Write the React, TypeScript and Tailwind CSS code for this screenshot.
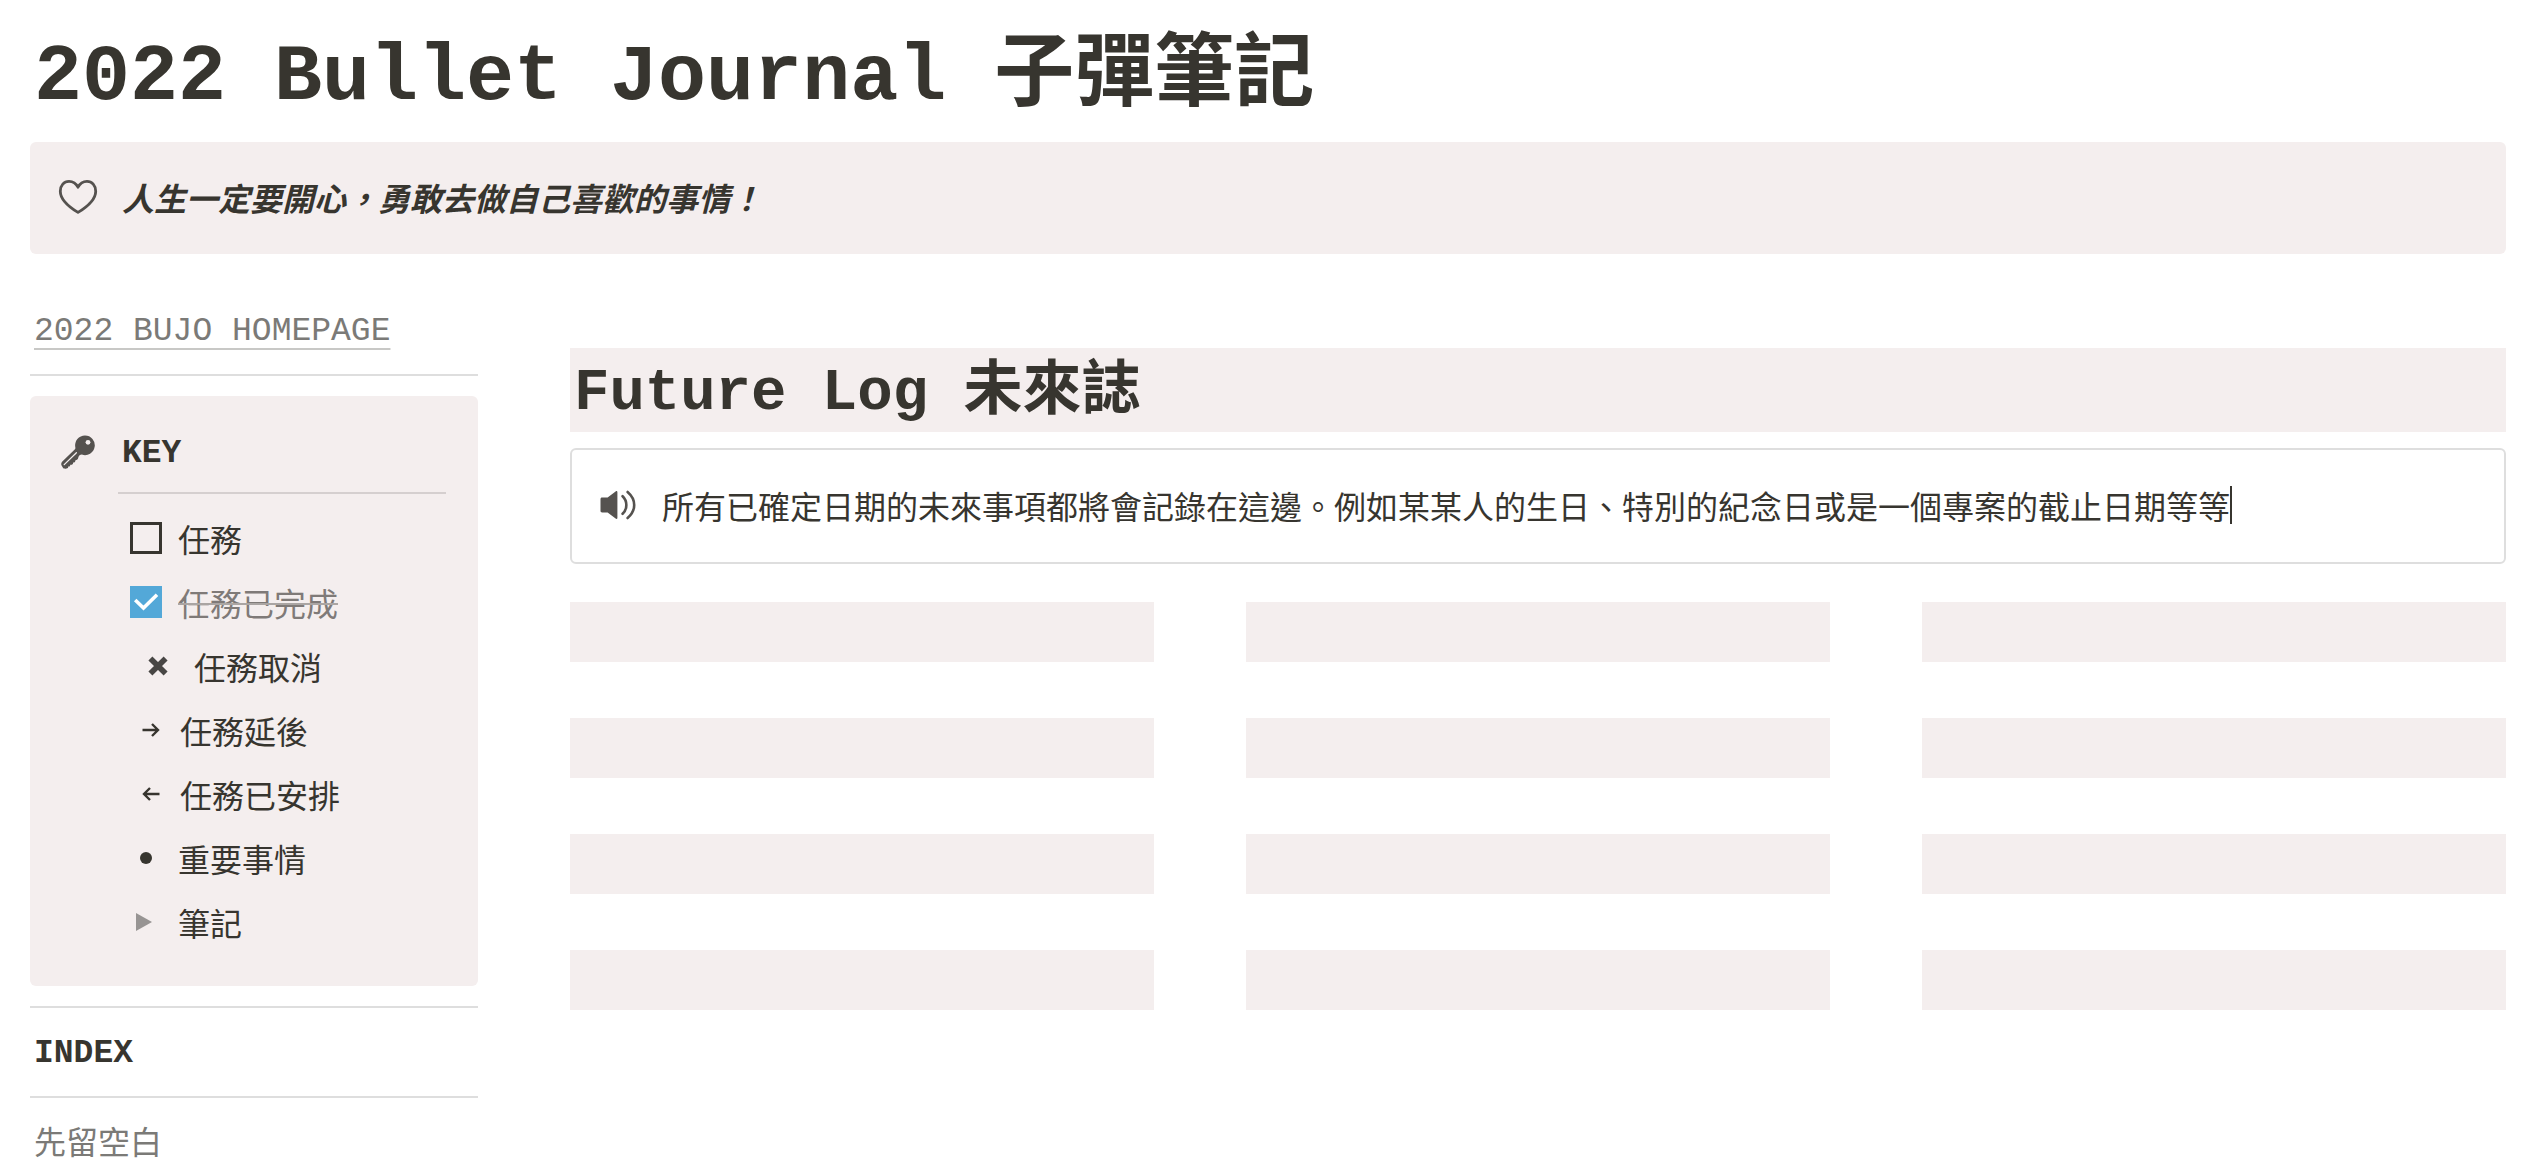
// src/App.tsx
import type { ReactNode } from "react";

interface KeyItem {
  label: string;
  marker: ReactNode;
  markerClass: string; // Marker column width and inset
}

function HeartIcon() {
  return (
    <svg viewBox="0 0 40 36" className="h-9 w-10 shrink-0" fill="none" aria-hidden="true">
      <path
        d="M20 33.4C15.4 30.6 2.3 22.6 2.3 12.2C2.3 6.4 6 2.3 11 2.3C15 2.3 18.2 4.6 20 8.2C21.8 4.6 25 2.3 29 2.3C34 2.3 37.7 6.4 37.7 12.2C37.7 22.6 24.6 30.6 20 33.4Z"
        stroke="#55524f"
        strokeWidth="2.8"
        strokeLinejoin="round"
      />
    </svg>
  );
}

function KeyIcon() {
  return (
    <svg viewBox="0 0 36 36" className="size-9 shrink-0" aria-hidden="true">
      <path
        d="M25 1.5A9.8 9.8 0 0 0 15.3 13.2C15.5 14.2 15.3 14.9 14.7 15.5L2.3 27.5C1 28.8 1 30.2 1.6 31.5L2.8 33.6C3.4 34.6 4.6 35 5.8 34.7L7.2 34.3C8 34.1 8.3 33.5 8.2 32.6C9.6 32.7 10.3 32 10.3 30.7C12 31.1 13.2 30.3 13.1 28.5C14.9 28.6 15.5 27.7 15.2 26.4C17 26.3 18 25.3 18.3 23.6C18.8 21.8 20 20.6 21.9 20.6A9.8 9.8 0 1 0 25 1.5Z"
        fill="#55524f"
      />
      <circle cx="28" cy="8.3" r="2.4" fill="#f4eeee" />
      <path d="M4.2 30.6L16.4 18.8" stroke="#f4eeee" strokeWidth="1.3" strokeLinecap="round" />
    </svg>
  );
}

function SpeakerIcon() {
  return (
    <svg viewBox="0 0 36 30" className="h-[30px] w-9 shrink-0" fill="none" aria-hidden="true">
      <path
        d="M2.2 7.6H7.6L15.6 1.4C16.6 0.7 17.4 1 17.4 2.2V27.8C17.4 29 16.6 29.3 15.6 28.6L7.6 22.4H2.2C1 22.4 0.5 21.8 0.5 20.7V9.3C0.5 8.2 1 7.6 2.2 7.6Z"
        fill="#55524f"
      />
      <path
        d="M22.6 6.2C27.6 11 27.6 19 22.6 23.8M27.6 2C36.4 9.6 36.4 20.4 27.6 28"
        stroke="#55524f"
        strokeWidth="2.6"
        strokeLinecap="round"
      />
    </svg>
  );
}

function CrossIcon() {
  return (
    <svg viewBox="0 0 20 20" className="size-5" aria-hidden="true">
      <path d="M2.4 2.4L17.6 17.6M17.6 2.4L2.4 17.6" stroke="#484644" strokeWidth="5.6" />
    </svg>
  );
}

function ArrowIcon({ left = false }: { left?: boolean }) {
  return (
    <svg viewBox="0 0 18 14" className="h-3.5 w-[18px]" fill="none" aria-hidden="true">
      <path
        d={left ? "M17.5 7H2M8 1L2 7L8 13" : "M0.5 7H16M10 1L16 7L10 13"}
        stroke="#37352f"
        strokeWidth="2.4"
      />
    </svg>
  );
}

const keyItems: KeyItem[] = [
  { label: "任務取消", marker: <CrossIcon />, markerClass: "w-16 pl-4.5" },
  { label: "任務延後", marker: <ArrowIcon />, markerClass: "w-[50px] pl-3" },
  { label: "任務已安排", marker: <ArrowIcon left />, markerClass: "w-[50px] pl-3" },
  {
    label: "重要事情",
    marker: <span className="block size-3 rounded-full bg-[#37352f]" />,
    markerClass: "w-12 pl-2.5",
  },
  {
    label: "筆記",
    marker: (
      <svg viewBox="0 0 16 18" className="h-[18px] w-4" aria-hidden="true">
        <path d="M0 0L16 9L0 18Z" fill="#979493" />
      </svg>
    ),
    markerClass: "w-12 pl-1.5",
  },
];

function TaskItem({ id, label, done = false }: { id: string; label: string; done?: boolean }) {
  return (
    <li className="flex h-16 items-center">
      <span className="relative w-12 shrink-0">
        <input
          id={id}
          type="checkbox"
          defaultChecked={done}
          className="peer block size-8 appearance-none border-3 border-[#37352f] checked:border-0 checked:bg-[#53a8d8]"
        />
        <svg
          viewBox="0 0 32 32"
          fill="none"
          className="pointer-events-none absolute left-0 top-0 hidden size-8 peer-checked:block"
          aria-hidden="true"
        >
          <path d="M5.2 14L13.5 22L27 8.8" stroke="white" strokeWidth="3.6" />
        </svg>
      </span>
      <label
        htmlFor={id}
        className={done ? "text-[#7f7a78] line-through decoration-[#aaa5a3] decoration-2" : ""}
      >
        {label}
      </label>
    </li>
  );
}

function Divider() {
  return <hr className="my-5 border-t-2 border-[#dedede]" />;
}

export default function App() {
  return (
    <main className="min-h-screen bg-white pl-[30px] pr-8 pt-[30px] font-['Noto_Sans_CJK_TC',sans-serif] text-[32px] leading-[48px] text-[#37352f]">
      <h1 className="px-1 font-['Liberation_Mono','Noto_Sans_CJK_TC',monospace] text-[80px] font-bold leading-[96px]">
        2022 Bullet Journal 子彈筆記
      </h1>

      <section className="mt-4 flex items-center rounded-md bg-[#f4eeee] px-7 pb-[33px] pt-[31px]">
        <HeartIcon />
        <p className="pl-6 font-bold italic">人生一定要開心，勇敢去做自己喜歡的事情！</p>
      </section>

      <div className="grid grid-cols-[448px_1fr] gap-[92px]">
        <aside className="min-w-0 pt-[52px]">
          <a
            href="#homepage"
            className="block whitespace-nowrap px-1 pt-1 font-['Liberation_Mono',monospace] text-[33px] leading-[44px] text-[#7b7a77] underline decoration-[#c8c8c6] decoration-2 underline-offset-8"
          >
            2022 BUJO HOMEPAGE
          </a>
          <Divider />

          <section className="flex rounded-md bg-[#f4eeee] py-8 pl-[30px] pr-8">
            <div className="flex h-12 w-[58px] shrink-0 items-center">
              <KeyIcon />
            </div>
            <div className="min-w-0 flex-1">
              <h2 className="px-1 pt-1 font-['Liberation_Mono',monospace] text-[33px] font-bold leading-[44px]">
                KEY
              </h2>
              <hr className="mb-3 mt-4 border-t-2 border-[#d5cfcf]" />
              <ul className="pl-3">
                <TaskItem id="task" label="任務" />
                <TaskItem id="task-done" label="任務已完成" done />
                {keyItems.map((item) => (
                  <li key={item.label} className="flex h-16 items-center">
                    <span className={`shrink-0 ${item.markerClass}`}>{item.marker}</span>
                    {item.label}
                  </li>
                ))}
              </ul>
            </div>
          </section>

          <Divider />
          <h2 className="px-1 pt-1 font-['Liberation_Mono',monospace] text-[33px] font-bold leading-[44px]">
            INDEX
          </h2>
          <Divider />
          <p className="px-1 leading-[44px] text-[#7b7a77]">先留空白</p>
        </aside>

        <section className="min-w-0 pt-[94px]">
          <h2 className="bg-[#f4eeee] px-1 pt-2 font-['Liberation_Mono','Noto_Sans_CJK_TC',monospace] text-[59px] font-bold leading-[76px]">
            Future Log 未來誌
          </h2>
          <div className="mt-4 flex items-center rounded-md border-2 border-[#dedede] px-7 pb-[33px] pt-[31px]">
            <SpeakerIcon />
            <p className="flex items-center pl-[26px]">
              所有已確定日期的未來事項都將會記錄在這邊。例如某某人的生日、特別的紀念日或是一個專案的截止日期等等
              <span className="h-[38px] w-0.5 shrink-0 bg-[#37352f]" />
            </p>
          </div>

          <div className="mt-[38px] grid grid-cols-3 gap-x-[92px] gap-y-14">
            {Array.from({ length: 12 }, (_, month) => (
              <div key={month} className="h-[60px] bg-[#f4eeee]" />
            ))}
          </div>
        </section>
      </div>
    </main>
  );
}
